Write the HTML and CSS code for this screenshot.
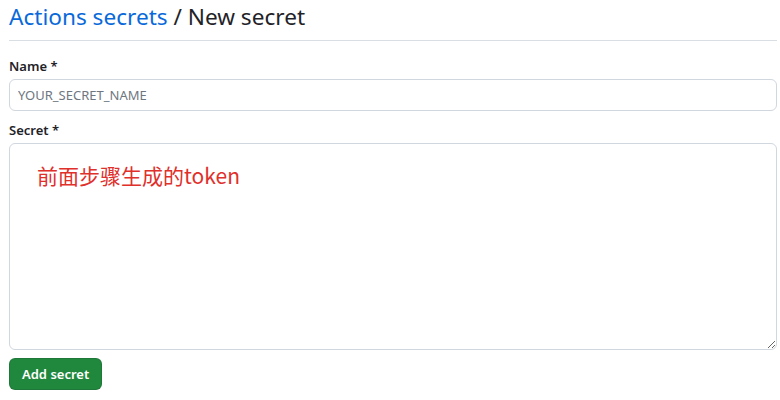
FILE: index.html
```html
<!DOCTYPE html>
<html lang="zh">
<head>
<meta charset="utf-8">
<link rel="stylesheet" href="styles.css">
</head>
<body>
<div class="page">
  <h1 class="title"><a class="crumb" href="#">Actions secrets</a> / New secret</h1>
  <form class="form">
    <label class="label" for="name">Name *</label>
    <input class="input" id="name" type="text" placeholder="YOUR_SECRET_NAME">
    <label class="label label-secret" for="secret">Secret *</label>
    <div class="area-wrap">
      <textarea class="area" id="secret"></textarea>
      <span class="note">前面步骤生成的token</span>
    </div>
    <button class="btn" type="button">Add secret</button>
  </form>
</div>
</body>
</html>
```
FILE: styles.css
```css
* { box-sizing: border-box; }
html, body { margin: 0; background: #fff; }
body {
  font-family: "Noto Sans", "Open Sans", "Noto Sans CJK SC", sans-serif;
  color: #1f2328;
}
.page { padding: 0 3px 0 9px; }
.title {
  margin: 0;
  padding: 2px 0 8px;
  font-size: 22.6px;
  font-weight: 400;
  line-height: 30px;
  border-bottom: 1px solid #d8dee4;
}
.crumb { color: #0969da; text-decoration: none; }
.form { display: flex; flex-direction: column; align-items: flex-start; padding-top: 16px; }
.label { font-size: 13px; font-weight: 600; line-height: 18px; margin-bottom: 4px; }
.label-secret { margin-top: 10px; }
.input {
  width: 100%;
  height: 32px;
  padding: 5px 8px;
  border: 1px solid #d0d7de;
  border-radius: 6px;
  font: inherit;
  font-size: 13px;
  color: #1f2328;
}
.input::placeholder { color: #6e7781; }
.area-wrap { position: relative; width: 100%; }
.area {
  display: block;
  width: 100%;
  height: 207px;
  border: 1px solid #d0d7de;
  border-radius: 6px;
  font: inherit;
}
.note {
  position: absolute;
  left: 28px;
  top: 18px;
  font-family: "Noto Sans CJK SC", sans-serif;
  font-size: 21px;
  line-height: 28px;
  color: #e0302c;
}
.btn {
  margin-top: 8px;
  height: 32px;
  padding: 0 12px;
  background: #1f883d;
  color: #fff;
  border: 1px solid rgba(31,35,40,0.15);
  border-radius: 6px;
  font: inherit;
  font-size: 13px;
  font-weight: 600;
}
```
